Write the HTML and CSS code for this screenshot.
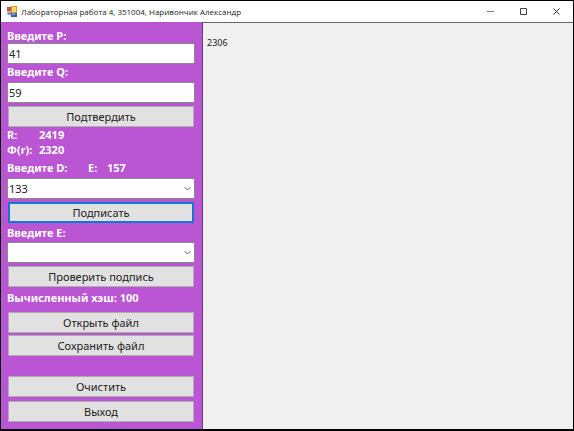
FILE: index.html
```html
<!DOCTYPE html>
<html lang="ru">
<head>
<meta charset="utf-8">
<meta name="viewport" content="width=device-width, initial-scale=1">
<title>Лабораторная работа 4, 351004, Наривончик Александр</title>
<link rel="stylesheet" href="styles.css">
</head>
<body>
<div class="window">
  <header class="titlebar">
    <svg class="app-icon" width="11" height="11" viewBox="0 0 11 11" aria-hidden="true">
      <rect x="0" y="1" width="5" height="4" fill="#d0503c"/>
      <rect x="0" y="5" width="5" height="4" fill="#b9bfd6"/>
      <rect x="1" y="6" width="3" height="3" fill="#8c94b8"/>
      <rect x="4" y="6" width="6" height="5" fill="#3a62b4"/>
      <rect x="5" y="7" width="3" height="2" fill="#6f9be0"/>
      <rect x="4" y="0" width="6" height="7" fill="#d99a1c"/>
      <rect x="5" y="1" width="4" height="5" fill="#ffd968"/>
    </svg>
    <h1 class="title">Лабораторная работа 4, 351004, Наривончик Александр</h1>
    <div class="window-buttons">
      <button class="window-button" type="button" aria-label="Свернуть">
        <svg width="8" height="8" viewBox="0 0 8 8"><path d="M0 3.5H7" stroke="#777"/></svg>
      </button>
      <button class="window-button" type="button" aria-label="Развернуть">
        <svg width="8" height="8" viewBox="0 0 8 8"><path d="M0.5 0.5H6.5V6.5H0.5Z" fill="none" stroke="#444"/></svg>
      </button>
      <button class="window-button" type="button" aria-label="Закрыть">
        <svg width="8" height="8" viewBox="0 0 8 8"><path d="M0.5 0.5L6.5 6.5M6.5 0.5L0.5 6.5" fill="none" stroke="#333"/></svg>
      </button>
    </div>
  </header>
  <div class="content">
    <form class="panel">
      <label class="caption" for="p">Введите P:</label>
      <input class="field" id="p" type="text" value="41">
      <label class="caption caption-spaced" for="q">Введите Q:</label>
      <input class="field" id="q" type="text" value="59">
      <button class="button" type="button">Подтвердить</button>
      <dl class="results">
        <dt>R:</dt><dd>2419</dd>
        <dt>Ф(r):</dt><dd>2320</dd>
      </dl>
      <div class="key-row">
        <label class="caption" for="d">Введите D:</label>
        <span class="caption">E:</span>
        <output class="caption">157</output>
      </div>
      <div class="combo">
        <select class="field" id="d"><option>133</option></select>
        <svg class="chevron" width="7" height="5" viewBox="0 0 7 5" aria-hidden="true"><path d="M0.5 1L3.5 4L6.5 1" fill="none" stroke="#666"/></svg>
      </div>
      <button class="button button-default" type="button">Подписать</button>
      <label class="caption caption-sign" for="e">Введите E:</label>
      <div class="combo">
        <select class="field" id="e"><option></option></select>
        <svg class="chevron" width="7" height="5" viewBox="0 0 7 5" aria-hidden="true"><path d="M0.5 1L3.5 4L6.5 1" fill="none" stroke="#666"/></svg>
      </div>
      <button class="button" type="button">Проверить подпись</button>
      <p class="caption hash">Вычисленный хэш: 100</p>
      <div class="button-group">
        <button class="button" type="button">Открыть файл</button>
        <button class="button" type="button">Сохранить файл</button>
      </div>
      <div class="button-group button-group-end">
        <button class="button" type="button">Очистить</button>
        <button class="button" type="button">Выход</button>
      </div>
    </form>
    <main class="output">2306</main>
  </div>
</div>
</body>
</html>
```
FILE: styles.css
```css
* {
  box-sizing: border-box;
}

body {
  margin: 0;
  font-family: "Noto Sans", "Open Sans", sans-serif;
  color: #222;
}

.window {
  display: flex;
  flex-direction: column;
  min-height: 100vh;
  border: 1px solid #000;
  border-bottom-width: 2px;
  background: #fff;
}

.titlebar {
  display: flex;
  align-items: center;
  height: 21px;
  padding-left: 6px;
}

.app-icon {
  flex: none;
}

.title {
  flex: 1;
  margin: 0 0 0 3px;
  font-family: "Open Sans", "Noto Sans", sans-serif;
  font-size: 8px;
  font-weight: 400;
  line-height: 12px;
  white-space: nowrap;
}

.window-buttons {
  display: flex;
}

.window-button {
  display: flex;
  align-items: center;
  justify-content: center;
  width: 33px;
  height: 21px;
  padding: 0;
  border: 0;
  background: none;
}

.content {
  display: flex;
  flex: 1;
}

.panel {
  display: flex;
  flex: none;
  flex-direction: column;
  width: 202px;
  padding: 6px 7px 5px 6px;
  border-right: 1px solid #6b3a7c;
  background: #ba55d3;
}

.caption,
.results {
  margin: 0;
  font-size: 11px;
  font-weight: 700;
  line-height: 15px;
  color: #fff;
}

.caption-spaced {
  margin-bottom: 3px;
}

.field {
  width: 100%;
  height: 21px;
  margin: 0;
  padding: 0 1px;
  border: 1px solid #8a8a8a;
  border-radius: 0;
  background: #fff;
  color: #222;
  font-family: inherit;
  font-size: 11px;
  line-height: 19px;
  appearance: none;
}

.button {
  height: 21px;
  margin: 3px 1px 0;
  padding: 0;
  border: 1px solid #adadad;
  background: #e1e1e1;
  color: #222;
  font-family: inherit;
  font-size: 11px;
  line-height: 18px;
}

.button-default {
  border: 2px solid #0f78d7;
}

.results {
  display: grid;
  grid-template-columns: 32px auto;
}

.results dd {
  margin: 0;
}

.key-row {
  display: grid;
  grid-template-columns: 81px 19px auto;
  margin: 3px 0;
}

.combo {
  position: relative;
  display: flex;
}

.chevron {
  position: absolute;
  top: 8px;
  right: 4px;
  pointer-events: none;
}

.caption-sign {
  margin: 2px 0;
}

.hash {
  margin: 3px 0;
}

.button-group {
  display: grid;
  gap: 2px;
  margin-top: 4px;
}

.button-group .button {
  margin-top: 0;
}

.button-group-end {
  gap: 4px;
  margin-top: 20px;
}

.output {
  flex: 1;
  padding: 14px 4px;
  border-top: 1px solid #666;
  background: #f0f0f0;
  font-size: 9px;
  line-height: 12px;
}
```
